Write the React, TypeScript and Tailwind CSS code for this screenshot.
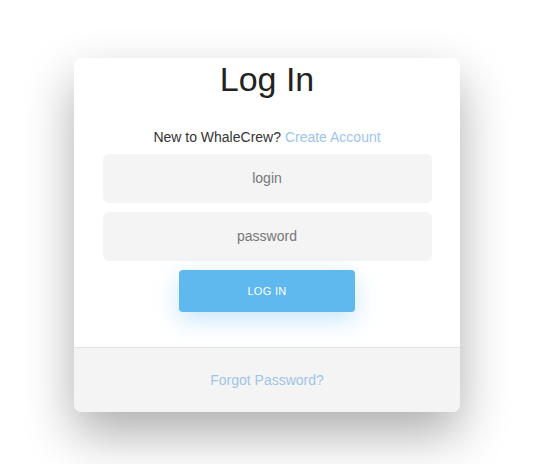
export default function App() {
  return (
    <div
      className="min-h-[464px] w-full bg-white flex pl-[74px] pt-[58px]"
      style={{ fontFamily: '"Liberation Sans", Arial, sans-serif' }}
    >
      <div className="w-[386px] h-[354px] bg-white rounded-lg shadow-[0_22px_50px_rgba(0,0,0,0.32)] flex flex-col overflow-hidden">
        <div className="flex-1 flex flex-col items-center">
          <h1 className="text-[34px] leading-[42px] text-[#222]">Log In</h1>
          <p className="mt-[28px] text-[14px] leading-[18px] text-[#333]">
            New to WhaleCrew? <a className="text-[#9ec4ea]">Create Account</a>
          </p>
          <div className="mt-[8px] w-[329px] h-[49px] bg-[#f4f4f4] rounded-md flex items-center justify-center text-[14px] text-[#777]">
            login
          </div>
          <div className="mt-[9px] w-[329px] h-[49px] bg-[#f4f4f4] rounded-md flex items-center justify-center text-[14px] text-[#777]">
            password
          </div>
          <button className="mt-[9px] w-[176px] h-[42px] bg-[#5fb9ee] rounded-[4px] text-white text-[11px] tracking-[0.3px] shadow-[0_8px_24px_rgba(95,185,238,0.35)]">
            LOG IN
          </button>
        </div>
        <div className="h-[65px] bg-[#f4f4f4] border-t border-[#dfe4ea] flex items-center justify-center text-[14px] text-[#9ec4ea]">
          Forgot Password?
        </div>
      </div>
    </div>
  )
}
